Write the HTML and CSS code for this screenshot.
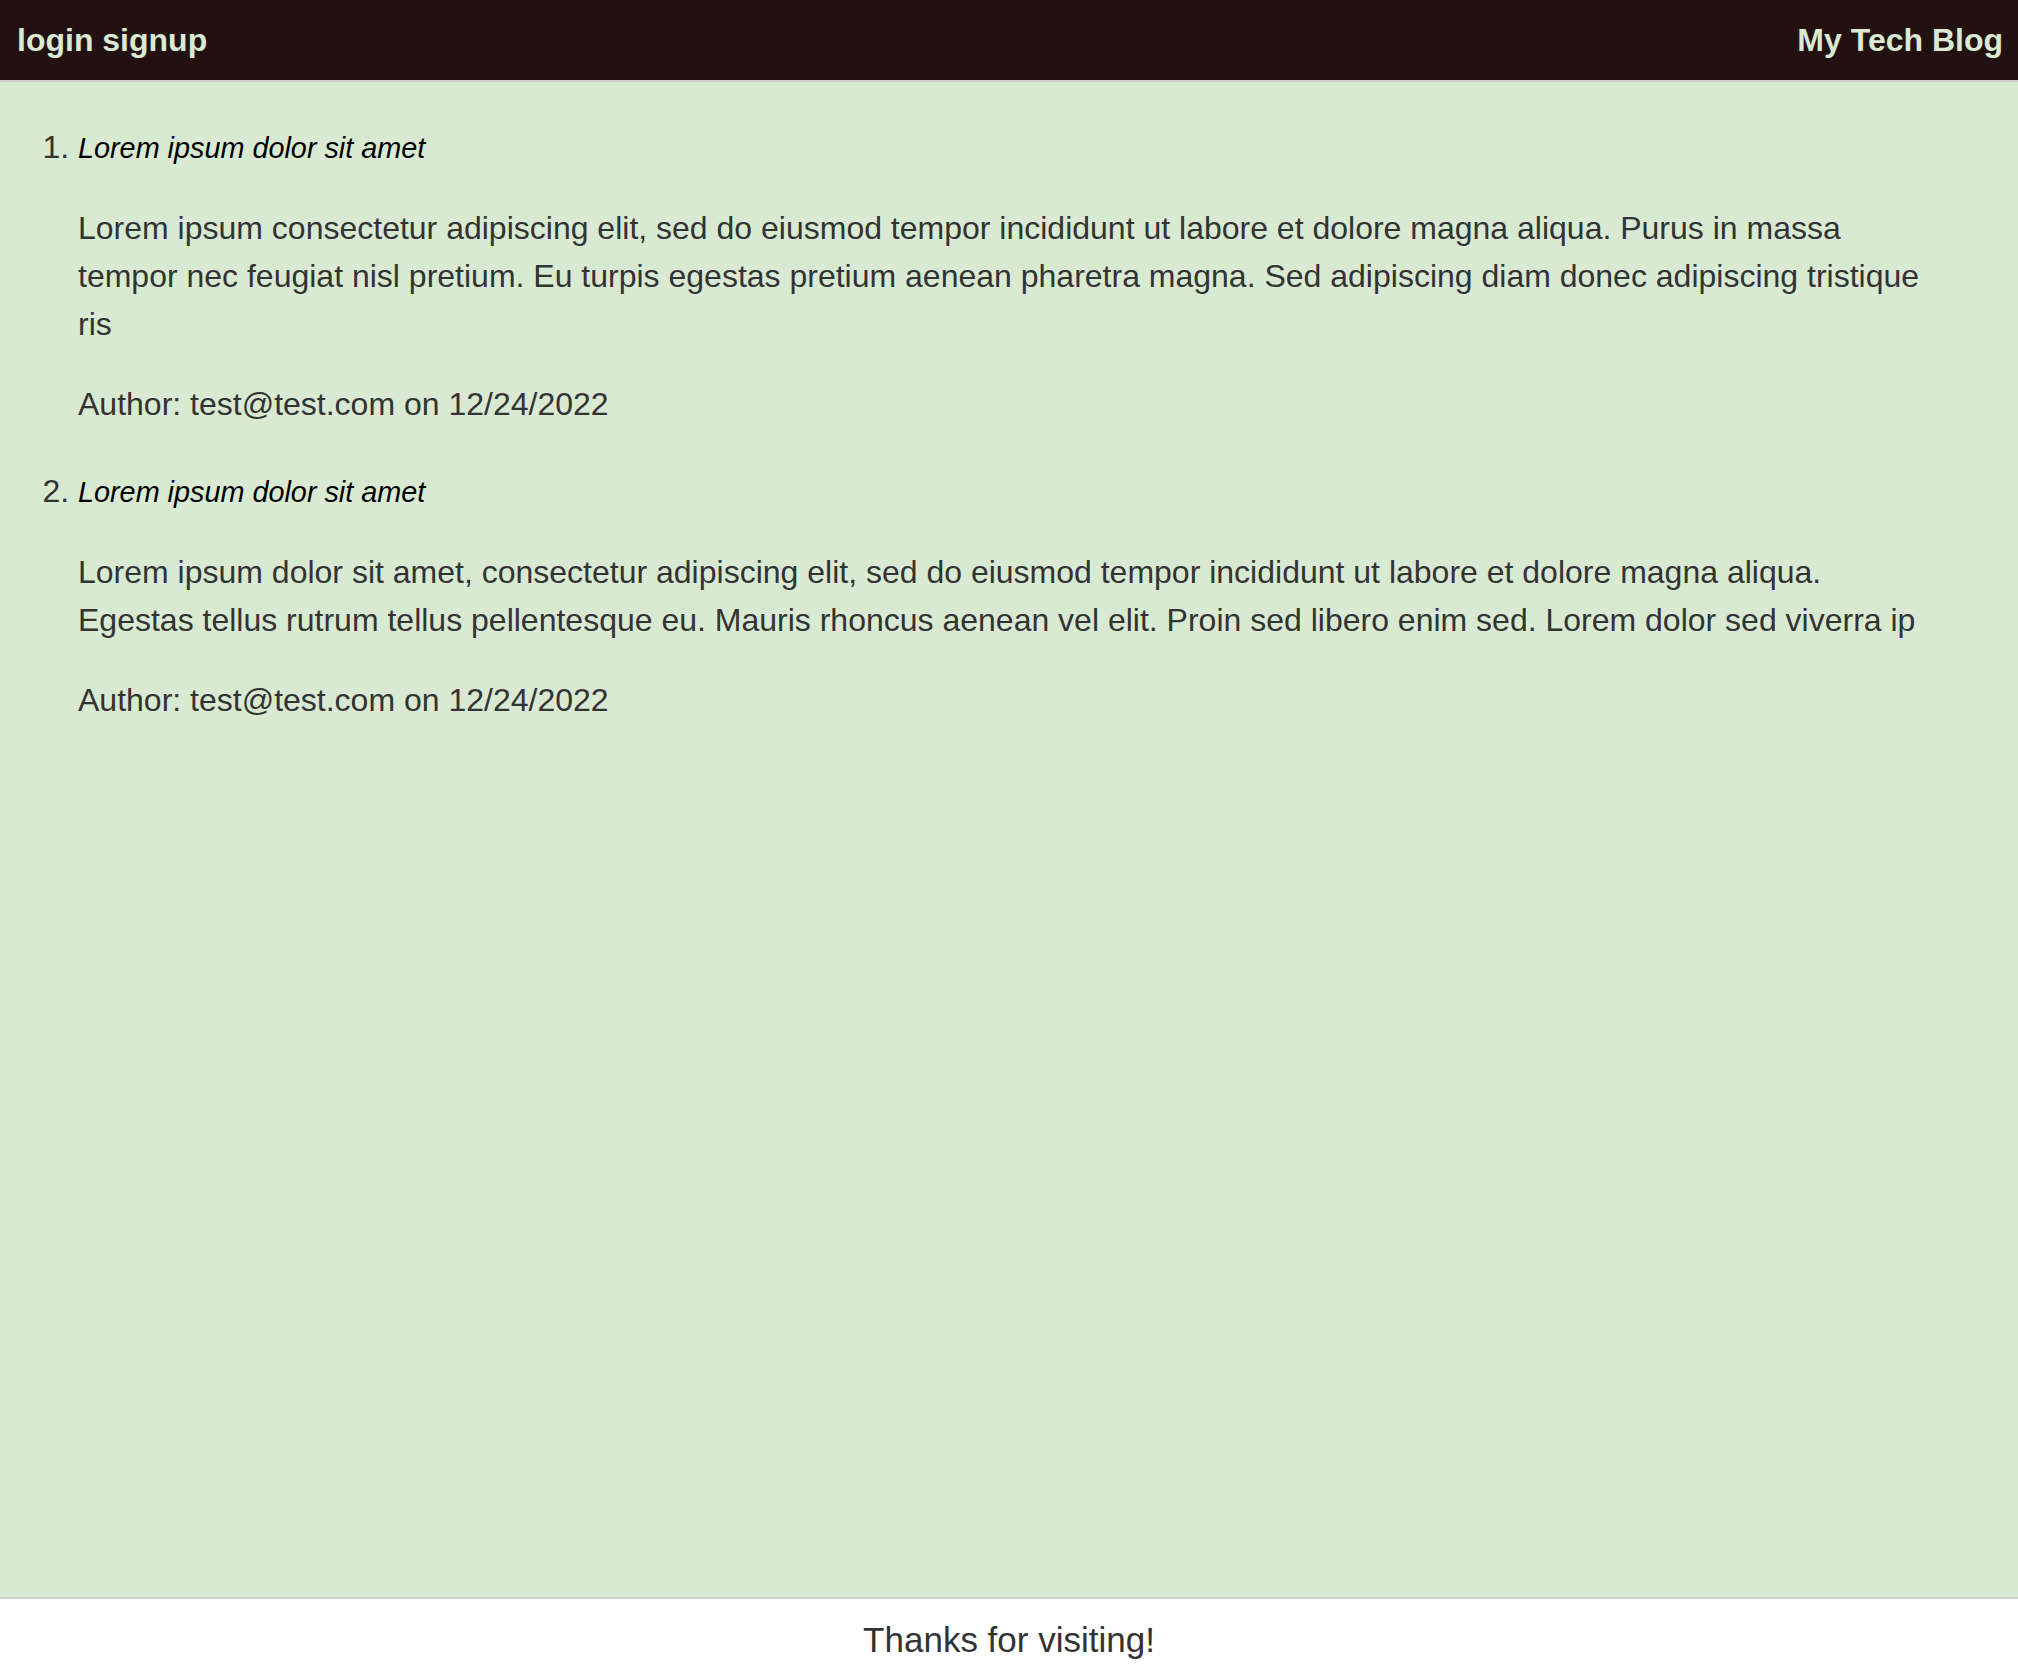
FILE: index.html
```html
<!DOCTYPE html>
<html lang="en">
<head>
<meta charset="utf-8">
<title>My Tech Blog</title>
<link rel="stylesheet" href="styles.css">
</head>
<body>
<header class="site-header">
  <nav class="nav-links"><a class="nav-link" href="#">login</a> <a class="nav-link" href="#">signup</a></nav>
  <div class="brand">My Tech Blog</div>
</header>
<main class="content">
  <ol class="post-list">
    <li class="post">
      <div class="post-title">Lorem ipsum dolor sit amet</div>
      <p class="post-body">Lorem ipsum consectetur adipiscing elit, sed do eiusmod tempor incididunt ut labore et dolore magna aliqua. Purus in massa tempor nec feugiat nisl pretium. Eu turpis egestas pretium aenean pharetra magna. Sed adipiscing diam donec adipiscing tristique ris</p>
      <p class="post-meta">Author: test@test.com on 12/24/2022</p>
    </li>
    <li class="post">
      <div class="post-title">Lorem ipsum dolor sit amet</div>
      <p class="post-body">Lorem ipsum dolor sit amet, consectetur adipiscing elit, sed do eiusmod tempor incididunt ut labore et dolore magna aliqua. Egestas tellus rutrum tellus pellentesque eu. Mauris rhoncus aenean vel elit. Proin sed libero enim sed. Lorem dolor sed viverra ip</p>
      <p class="post-meta">Author: test@test.com on 12/24/2022</p>
    </li>
  </ol>
</main>
<footer class="site-footer">Thanks for visiting!</footer>
</body>
</html>
```
FILE: styles.css
```css
html, body {
  margin: 0;
  padding: 0;
}
body {
  min-height: 100vh;
  display: flex;
  flex-direction: column;
  font-family: "Liberation Sans", Arial, Helvetica, sans-serif;
  background: #d9ead3;
  color: #333333;
}
.site-header {
  height: 80px;
  flex: 0 0 auto;
  display: flex;
  align-items: center;
  justify-content: space-between;
  padding: 0 15px 0 17px;
  background: #231010;
  border-bottom: 2px solid #cfcfcf;
  color: #d9ead3;
  font-size: 32px;
  font-weight: bold;
}
.nav-link {
  color: #d9ead3;
  text-decoration: none;
}
.brand {
  color: #d9ead3;
}
.content {
  flex: 1 1 auto;
  background: #d9ead3;
}
.post-list {
  margin: 41px 0 0 0;
  padding: 0 78px 0 78px;
  font-size: 32px;
  line-height: 48px;
  color: #333333;
}
.post + .post {
  margin-top: 39px;
}
.post-title {
  font-size: 28.8px;
  line-height: 48px;
  font-style: italic;
  color: #000000;
}
.post-body,
.post-meta {
  margin: 32px 0 0 0;
  font-size: 32px;
  line-height: 48px;
  color: #333333;
}
.site-footer {
  flex: 0 0 auto;
  padding: 21px 0 16px 0;
  line-height: 40px;
  text-align: center;
  background: #ffffff;
  border-top: 2px solid #cfcfcf;
  font-size: 35px;
  color: #333333;
}
```
